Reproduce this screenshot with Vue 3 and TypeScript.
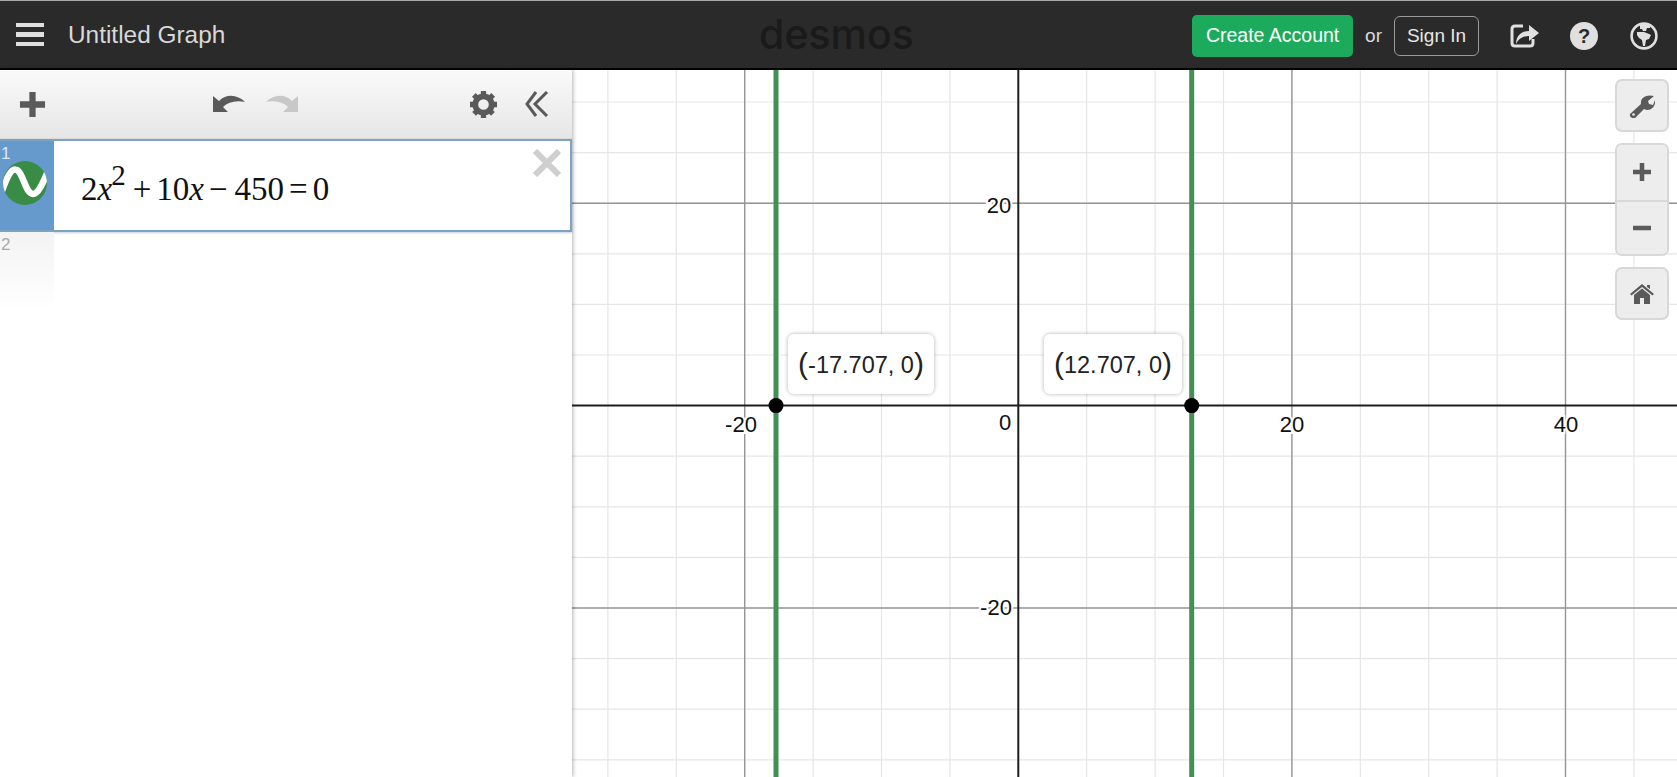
<template>
  <div class="app">
    <header class="topbar">
      <div class="topbar-left">
        <div class="hamburger"><span></span><span></span><span></span></div>
        <span class="title">Untitled Graph</span>
      </div>
      <div class="logo">desmos</div>
      <div class="topbar-right">
        <button class="create">Create Account</button>
        <span class="or">or</span>
        <button class="signin">Sign In</button>
        <svg class="top-icon share" viewBox="0 0 30 26">
          <path d="M13 3H5Q2 3 2 6V20Q2 23 5 23H20Q23 23 23 20V16" fill="none" stroke="#e0e0e0" stroke-width="3" />
          <path d="M6 21C6 13 11 8 19 8V2L29 10L19 18V13C14 13 9 15 6 21Z" fill="#e0e0e0" />
        </svg>
        <svg class="top-icon help" viewBox="0 0 28 28">
          <circle cx="14" cy="14" r="14" fill="#e0e0e0" />
          <text x="14" y="21" text-anchor="middle" class="help-mark">?</text>
        </svg>
        <svg class="top-icon globe" viewBox="0 0 28 28">
          <circle cx="14" cy="14" r="12.4" fill="none" stroke="#e0e0e0" stroke-width="2.6" />
          <path d="M10 3L14 1L20 3L20 6L17 6L16 9L13 9L12 7L10 7ZM7 10L14 10L19 12L21 13L19 17L16 18L15 24L13 24L12 18L9 16L7 13Z" fill="#e0e0e0" />
        </svg>
      </div>
    </header>

    <main class="body">
      <aside class="sidebar">
        <div class="toolbar">
          <svg class="tool plus" viewBox="0 0 28 28"><path d="M14 1V27M1 14H27" stroke="#5a5a5a" stroke-width="6.5" /></svg>
          <div class="undo-redo">
            <svg class="tool arrow" viewBox="0 0 32 20">
              <path d="M0 2L0 18L15 18L10 13C15 8 23 6 32 8C25 1 14 -1 6 7Z" fill="#5a5a5a" />
            </svg>
            <svg class="tool arrow" viewBox="0 0 32 20">
              <path d="M32 2L32 18L17 18L22 13C17 8 9 6 0 8C7 1 18 -1 26 7Z" fill="#c8c8c8" />
            </svg>
          </div>
          <div class="toolbar-right">
            <svg class="tool gear" viewBox="0 0 28 28">
              <circle cx="14" cy="14" r="8.5" fill="none" stroke="#5a5a5a" stroke-width="6" />
              <path d="M14 0V28M0 14H28M4 4L24 24M24 4L4 24" stroke="#5a5a5a" stroke-width="5.5" stroke-dasharray="5 18" />
            </svg>
            <svg class="tool chevrons" viewBox="0 0 24 26">
              <path d="M11 1L2 13L11 25M22 1L10 13L22 25" fill="none" stroke="#5a5a5a" stroke-width="3" />
            </svg>
          </div>
        </div>

        <div class="expr-row">
          <div class="expr-tab">
            <span class="line-no active">1</span>
            <svg class="wave" viewBox="0 0 44 44">
              <defs>
                <clipPath id="wave-clip"><circle cx="22" cy="22" r="22" /></clipPath>
              </defs>
              <circle cx="22" cy="22" r="22" fill="#388c46" />
              <path clip-path="url(#wave-clip)" d="M-1 30C4 16 8 8 12.500 8.500C20 9 22 33 30 33C35 33 40 22 45 10" fill="none" stroke="#fff" stroke-width="6.5" />
            </svg>
          </div>
          <div class="math">
            <span>2</span><i>x</i><sup>2</sup><span class="op">+</span><span>10</span><i>x</i><span class="op minus">−</span><span>450</span><span class="op">=</span><span>0</span>
          </div>
          <svg class="close" viewBox="0 0 28 28"><path d="M2 2L26 26M26 2L2 26" stroke="#cfcfcf" stroke-width="6" /></svg>
        </div>

        <div class="empty-row">
          <div class="empty-tab"><span class="line-no">2</span></div>
        </div>
      </aside>

      <section class="graph">
        <svg class="plane" width="1105" height="707">
          <line v-for="x in minorX" :key="`mx${x}`" :x1="x" :x2="x" y1="0" y2="707" class="minor" />
          <line v-for="y in minorY" :key="`my${y}`" :y1="y" :y2="y" x1="0" x2="1105" class="minor" />
          <line v-for="x in majorX" :key="`Mx${x}`" :x1="x" :x2="x" y1="0" y2="707" class="major" />
          <line v-for="y in majorY" :key="`My${y}`" :y1="y" :y2="y" x1="0" x2="1105" class="major" />
          <line :x1="originX" :x2="originX" y1="0" y2="707" class="axis" />
          <line :y1="originY" :y2="originY" x1="0" x2="1105" class="axis" />
          <line v-for="r in roots" :key="`r${r}`" :x1="r" :x2="r" y1="0" y2="707" class="root" />
          <circle v-for="r in roots" :key="`c${r}`" :cx="r" :cy="originY" r="7.5" fill="#000" />
          <text
            v-for="t in labels"
            :key="t.text + t.x + t.y"
            :x="t.x"
            :y="t.y"
            text-anchor="middle"
            class="tick"
          >{{ t.text }}</text>
        </svg>

        <div class="point-label left"><span class="paren">(</span>-17.707, 0<span class="paren">)</span></div>
        <div class="point-label right"><span class="paren">(</span>12.707, 0<span class="paren">)</span></div>

        <div class="controls">
          <button class="ctl">
            <svg viewBox="0 0 26 24" width="26" height="24">
              <path d="M1 20L12 10C11 4 17 0 25 2L19 7L20 10L24 11L26 6C27 13 21 18 15 15L6 24C4 25 0 23 1 20Z" fill="#5a5a5a" />
              <circle cx="4.500" cy="20.500" r="1.300" fill="#eee" />
            </svg>
          </button>
          <div class="zoom-group">
            <button class="ctl flat">
              <svg viewBox="0 0 18 18" width="18" height="18"><path d="M9 0V18M0 9H18" stroke="#5a5a5a" stroke-width="4.500" /></svg>
            </button>
            <button class="ctl flat">
              <svg viewBox="0 0 18 18" width="18" height="18"><path d="M0 9H18" stroke="#5a5a5a" stroke-width="4.500" /></svg>
            </button>
          </div>
          <button class="ctl">
            <svg viewBox="0 0 24 20" width="24" height="20">
              <path d="M0 10L12 0L24 10L22.500 11.500L12 3L1.500 11.500Z M17 1H20V5L17 3Z" fill="#5a5a5a" />
              <path d="M4 11L12 4.500L20 11V20H14V14H10V20H4Z" fill="#5a5a5a" />
            </svg>
          </button>
        </div>
      </section>
    </main>
  </div>
</template>

<script setup lang="ts">
// graph space: local px of the plane, origin at the axes crossing
const originX = 446.3
const originY = 335.6
const stepX = 68.4
const stepY = 50.6

const range = (from: number, to: number): number[] => {
  const out: number[] = []
  for (let i = from; i <= to; i++) out.push(i)
  return out
}

const minorX = range(-6, 9).map((i) => originX + i * stepX)
const minorY = range(-6, 7).map((i) => originY + i * stepY)
const majorX = [-4, 4, 8].map((i) => originX + i * stepX)
const majorY = [-4, 4].map((i) => originY + i * stepY)

const roots = [204, 619.7]

const labels = [
  { text: '-20', x: 169, y: 362 },
  { text: '0', x: 433, y: 360 },
  { text: '20', x: 720, y: 362 },
  { text: '40', x: 994, y: 362 },
  { text: '20', x: 427, y: 143 },
  { text: '-20', x: 424, y: 545 },
]
</script>

<style>
html,
body {
  margin: 0;
  background: #fff;
  overflow: hidden;
}
</style>

<style scoped>
.app {
  width: 1677px;
  height: 777px;
  display: flex;
  flex-direction: column;
  font-family: "Liberation Sans", Arial, sans-serif;
  overflow: hidden;
}

.topbar {
  height: 70px;
  box-sizing: border-box;
  flex-shrink: 0;
  display: grid;
  grid-template-columns: 1fr auto 1fr;
  align-items: center;
  background: #2a2a2a;
  border-top: 1px solid #aaa;
  border-bottom: 2px solid #000;
}

.topbar-left {
  display: flex;
  align-items: center;
  padding-left: 16px;
}

.hamburger {
  width: 28px;
  display: flex;
  flex-direction: column;
  gap: 5px;
}

.hamburger span {
  height: 4.5px;
  background: #e0e0e0;
}

.title {
  margin-left: 24px;
  font-size: 24.4px;
  color: #d8d8d8;
}

.logo {
  font-family: "Inter", sans-serif;
  font-weight: 500;
  font-size: 41px;
  line-height: 1;
  color: #1a1a1a;
  transform: translate(-2px, 0);
}

.topbar-right {
  display: flex;
  align-items: center;
  justify-content: flex-end;
  padding-top: 2px;
}

button {
  font-family: inherit;
  padding: 0;
  margin: 0;
}

.create {
  width: 161px;
  height: 42px;
  background: #1cab5c;
  border: none;
  border-radius: 5px;
  color: #fff;
  font-size: 19.5px;
}

.or {
  margin: 0 12px;
  font-size: 19px;
  color: #dcdcdc;
}

.signin {
  width: 85px;
  height: 40px;
  background: transparent;
  border: 1.500px solid #9a9a9a;
  border-radius: 6px;
  color: #e6e6e6;
  font-size: 19px;
  margin-right: 31px;
}

.top-icon {
  display: block;
  flex-shrink: 0;
}

.share {
  width: 30px;
  height: 26px;
  margin-right: 30px;
}

.help {
  width: 28px;
  height: 28px;
  margin-right: 32px;
}

.help-mark {
  font-family: "Liberation Sans", sans-serif;
  font-weight: 700;
  font-size: 20px;
  fill: #2a2a2a;
}

.globe {
  width: 28px;
  height: 28px;
  margin-right: 19px;
}

.body {
  flex: 1;
  display: flex;
  min-height: 0;
}

.sidebar {
  width: 572px;
  flex-shrink: 0;
  background: #fff;
  box-shadow: 1px 0 4px rgba(0, 0, 0, 0.3);
  z-index: 2;
}

.toolbar {
  height: 69px;
  box-sizing: border-box;
  display: flex;
  align-items: center;
  justify-content: space-between;
  padding: 0 23px 0 19px;
  background: linear-gradient(#fafafa, #e6e6e6);
  border-bottom: 1px solid #ddd;
}

.tool {
  display: block;
}

.plus {
  width: 27px;
  height: 27px;
}

.undo-redo {
  display: flex;
  gap: 21px;
  margin-right: 5px;
}

.arrow {
  width: 32px;
  height: 20px;
}

.toolbar-right {
  display: flex;
  align-items: center;
  gap: 28px;
}

.gear {
  width: 27px;
  height: 27px;
}

.chevrons {
  width: 24px;
  height: 26px;
}

.expr-row {
  height: 93px;
  box-sizing: border-box;
  display: flex;
  position: relative;
  border: 2px solid #7ca3c0;
  border-left: none;
  box-shadow: 0 1px 2px rgba(100, 140, 180, 0.4);
}

.expr-tab {
  width: 54px;
  flex-shrink: 0;
  background: #6699cc;
  display: flex;
  align-items: center;
  justify-content: center;
  position: relative;
}

.wave {
  width: 44px;
  height: 44px;
  margin-left: -4px;
  margin-top: -5px;
}

.line-no {
  position: absolute;
  top: 3px;
  left: 1px;
  font-size: 17px;
  color: #aaa;
}

.line-no.active {
  color: #dde8f3;
}

.math {
  display: flex;
  align-items: baseline;
  padding: 32px 0 0 27px;
  font-family: "Liberation Serif", "Times New Roman", serif;
  font-size: 33px;
  line-height: 1;
  color: #111;
}

.math sup {
  font-size: 29px;
  line-height: 0;
  transform: translateY(-15px);
  margin: 0 2px 0 -1px;
}

.math .op {
  margin: 0 5px;
}

.math .minus {
  margin: 0 7px 0 5px;
}

.close {
  position: absolute;
  top: 8px;
  right: 9px;
  width: 28px;
  height: 28px;
}

.empty-row {
  height: 78px;
}

.empty-tab {
  width: 54px;
  height: 100%;
  position: relative;
  background: linear-gradient(#f3f3f3, #fff);
}

.graph {
  flex: 1;
  position: relative;
  overflow: hidden;
  background: #fff;
}

.plane {
  display: block;
}

.minor {
  stroke: #e6e6e6;
  stroke-width: 1.2;
}

.major {
  stroke: #969696;
  stroke-width: 1.4;
}

.axis {
  stroke: #1e1e1e;
  stroke-width: 2;
}

.root {
  stroke: #438f55;
  stroke-width: 5;
}

.tick {
  font-size: 22px;
  fill: #111;
  stroke: #fff;
  stroke-width: 4px;
  paint-order: stroke;
}

.point-label {
  position: absolute;
  top: 264px;
  height: 60px;
  box-sizing: border-box;
  display: flex;
  align-items: center;
  justify-content: center;
  padding-top: 3px;
  background: #fff;
  border-radius: 6px;
  box-shadow: 0 0 4px rgba(0, 0, 0, 0.3);
  font-size: 23.5px;
  color: #222;
}

.point-label.left {
  left: 216px;
  width: 146px;
}

.point-label.right {
  left: 472px;
  width: 138px;
}

.paren {
  font-size: 30px;
  font-weight: 300;
  line-height: 1;
  transform: translateY(-2px);
}

.controls {
  position: absolute;
  top: 9px;
  right: 8px;
  width: 54px;
  display: flex;
  flex-direction: column;
  gap: 11px;
}

.ctl {
  width: 54px;
  height: 53px;
  box-sizing: border-box;
  display: flex;
  align-items: center;
  justify-content: center;
  background: #ededed;
  border: 2px solid #d8d8d8;
  border-radius: 7px;
}

.zoom-group {
  display: flex;
  flex-direction: column;
  border: 2px solid #d8d8d8;
  border-radius: 7px;
  overflow: hidden;
}

.ctl.flat {
  width: 100%;
  height: 54.5px;
  border: none;
  border-radius: 0;
}

.ctl.flat + .ctl.flat {
  border-top: 2px solid #d8d8d8;
}
</style>
